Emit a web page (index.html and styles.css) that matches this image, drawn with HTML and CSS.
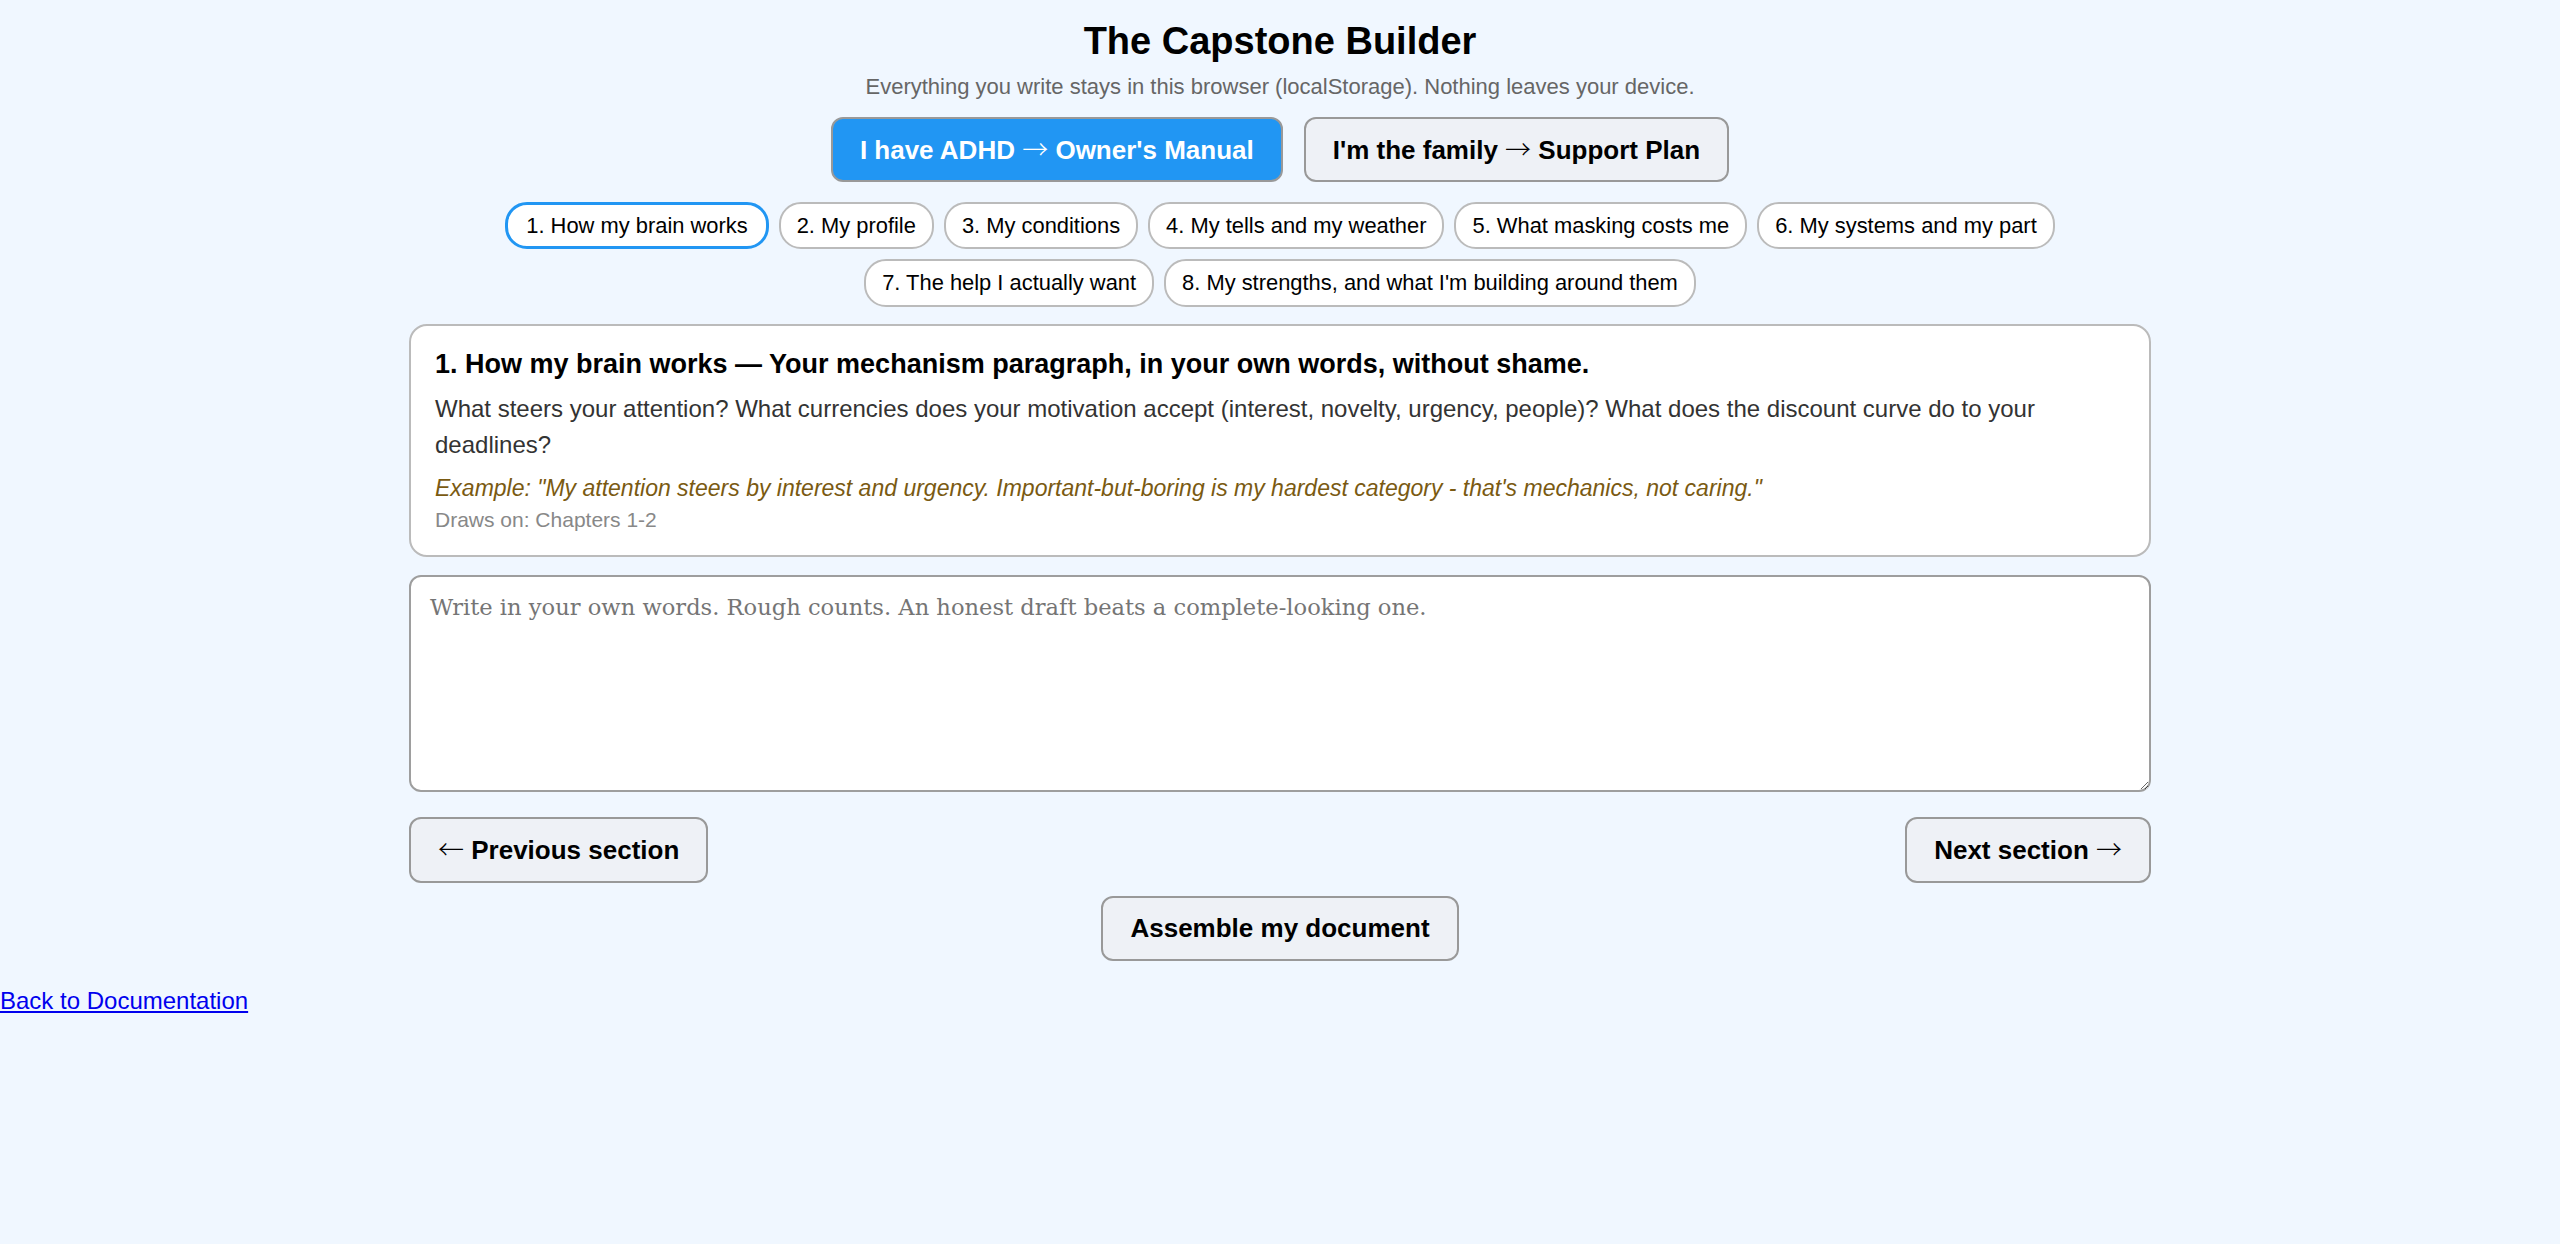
FILE: index.html
```html
<!DOCTYPE html>
<html lang="en">
<head>
<meta charset="utf-8">
<title>The Capstone Builder</title>
<link rel="stylesheet" href="styles.css">
</head>
<body>
<main class="app">
  <h1 class="title">The Capstone Builder</h1>
  <p class="subtitle">Everything you write stays in this browser (localStorage). Nothing leaves your device.</p>
  <div class="modes">
    <button class="btn btn-primary">I have ADHD <span class="arrow">→</span> Owner's Manual</button>
    <button class="btn">I'm the family <span class="arrow">→</span> Support Plan</button>
  </div>
  <nav class="pills">
    <button class="pill pill-active">1. How my brain works</button>
    <button class="pill">2. My profile</button>
    <button class="pill">3. My conditions</button>
    <button class="pill">4. My tells and my weather</button>
    <button class="pill">5. What masking costs me</button>
    <button class="pill">6. My systems and my part</button>
    <button class="pill">7. The help I actually want</button>
    <button class="pill">8. My strengths, and what I'm building around them</button>
  </nav>
  <section class="card">
    <h2 class="card-title">1. How my brain works — Your mechanism paragraph, in your own words, without shame.</h2>
    <p class="card-prompt">What steers your attention? What currencies does your motivation accept (interest, novelty, urgency, people)? What does the discount curve do to your deadlines?</p>
    <p class="card-example">Example: "My attention steers by interest and urgency. Important-but-boring is my hardest category - that's mechanics, not caring."</p>
    <p class="card-source">Draws on: Chapters 1-2</p>
  </section>
  <textarea class="entry" placeholder="Write in your own words. Rough counts. An honest draft beats a complete-looking one."></textarea>
  <div class="nav-row">
    <button class="btn"><span class="arrow">←</span> Previous section</button>
    <button class="btn">Next section <span class="arrow">→</span></button>
  </div>
  <div class="assemble-row">
    <button class="btn">Assemble my document</button>
  </div>
</main>
<div class="back"><a href="#">Back to Documentation</a></div>
</body>
</html>
```

FILE: styles.css
```css
html, body {
  margin: 0;
  padding: 0;
}
body {
  background: #f0f7ff;
  font-family: "Liberation Sans", Arial, sans-serif;
  font-size: 24px;
  color: #000;
}
.app {
  max-width: 1742px;
  margin: 0 auto;
  display: flex;
  flex-direction: column;
}
.title {
  margin: 20px 0 0;
  font-size: 38px;
  font-weight: bold;
  text-align: center;
  line-height: 1.15;
}
.subtitle {
  margin: 10px 0 0;
  font-size: 22px;
  color: #666;
  text-align: center;
}
.modes {
  margin-top: 17px;
  display: flex;
  justify-content: center;
  gap: 21px;
}
.btn {
  font-family: "Liberation Sans", Arial, sans-serif;
  font-size: 26px;
  font-weight: bold;
  line-height: 1.1;
  color: #000;
  background: #eef1f6;
  border: 2px solid #999;
  border-radius: 12px;
  padding: 16px 27px;
  cursor: pointer;
}
.btn-primary {
  background: #2196f3;
  color: #fff;
}
.arrow {
  font-family: "Noto Sans CJK SC", sans-serif;
  font-weight: 300;
  font-size: 26px;
  line-height: 1;
}
.pills {
  margin-top: 20px;
  display: flex;
  flex-wrap: wrap;
  justify-content: center;
  gap: 10px;
}
.pill {
  font-family: "Liberation Sans", Arial, sans-serif;
  font-size: 21.9px;
  line-height: 1.15;
  color: #000;
  background: #fff;
  border: 2px solid #bbb;
  border-radius: 22px;
  padding: 9px 16px;
  cursor: pointer;
}
.pill-active {
  border: 3px solid #2196f3;
  padding: 8px 18px;
}
.card {
  margin-top: 17px;
  background: #fff;
  border: 2px solid #bbb;
  border-radius: 18px;
  padding: 23px 24px 22px;
}
.card-title {
  margin: 0 0 11px;
  font-size: 27px;
  font-weight: bold;
  line-height: 1.15;
}
.card-prompt {
  margin: 0 0 9px;
  color: #333;
  line-height: 1.5;
}
.card-example {
  margin: 0 0 1px;
  font-size: 23px;
  font-style: italic;
  color: #7a5a12;
  line-height: 1.45;
}
.card-source {
  margin: 0;
  font-size: 21px;
  color: #888;
  line-height: 1.3;
}
.entry {
  margin-top: 18px;
  box-sizing: border-box;
  width: 100%;
  height: 217px;
  border: 2px solid #9e9e9e;
  border-radius: 12px;
  padding: 17px 19px;
  font-family: "DejaVu Serif", Georgia, serif;
  font-size: 22.6px;
  background: #fff;
  color: #222;
}
.entry::placeholder {
  color: #757575;
}
.nav-row {
  margin-top: 25px;
  display: flex;
  justify-content: space-between;
}
.assemble-row {
  margin-top: 13px;
  display: flex;
  justify-content: center;
}
.back {
  margin-top: 26px;
}
.back a {
  color: #0000ee;
  font-size: 24px;
}
```
